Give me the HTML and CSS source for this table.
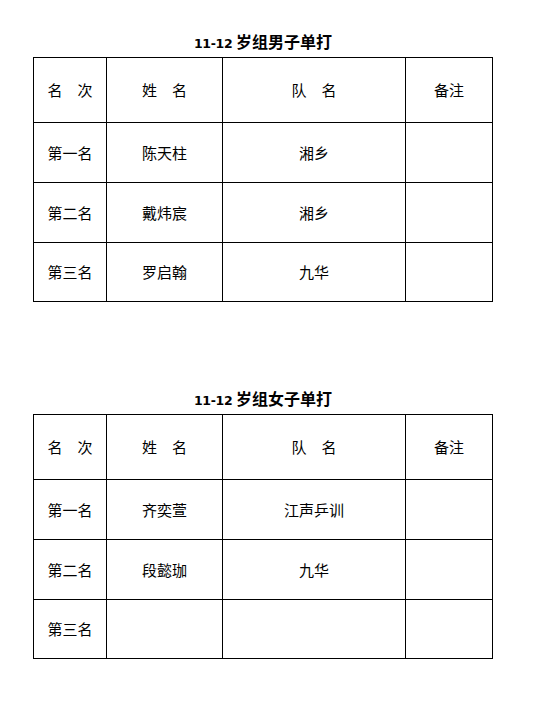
FILE: index.html
```html
<!DOCTYPE html>
<html>
<head>
<meta charset="utf-8">
<link rel="stylesheet" href="styles.css">
</head>
<body>
<div class="page">
  <section class="block">
    <h2 class="title"><span class="num">11-12</span> 岁组男子单打</h2>
    <table class="grid">
      <colgroup><col class="c1"><col class="c2"><col class="c3"><col class="c4"></colgroup>
      <tr class="head"><td>名　次</td><td>姓　名</td><td>队　名</td><td>备注</td></tr>
      <tr><td>第一名</td><td>陈天柱</td><td>湘乡</td><td></td></tr>
      <tr><td>第二名</td><td>戴炜宸</td><td>湘乡</td><td></td></tr>
      <tr class="last"><td>第三名</td><td>罗启翰</td><td>九华</td><td></td></tr>
    </table>
  </section>
  <section class="block second">
    <h2 class="title"><span class="num">11-12</span> 岁组女子单打</h2>
    <table class="grid">
      <colgroup><col class="c1"><col class="c2"><col class="c3"><col class="c4"></colgroup>
      <tr class="head"><td>名　次</td><td>姓　名</td><td>队　名</td><td>备注</td></tr>
      <tr><td>第一名</td><td>齐奕萱</td><td>江声乒训</td><td></td></tr>
      <tr><td>第二名</td><td>段懿珈</td><td>九华</td><td></td></tr>
      <tr class="last"><td>第三名</td><td></td><td></td><td></td></tr>
    </table>
  </section>
</div>
</body>
</html>
```
FILE: styles.css
```css
html, body {
  margin: 0;
  padding: 0;
  background: #fff;
}
body {
  font-family: "Noto Sans CJK SC", "Liberation Sans", sans-serif;
  color: #000;
}
.page {
  padding: 31px 0 0 33px;
  width: 460px;
}
.block.second {
  margin-top: 86px;
}
.title {
  margin: 0;
  height: 26px;
  line-height: 20px;
  font-size: 16px;
  font-weight: bold;
  text-align: center;
}
.title .num {
  font-family: "DejaVu Sans", sans-serif;
  font-size: 12.5px;
  letter-spacing: -0.3px;
}
.grid {
  border-collapse: collapse;
  table-layout: fixed;
  width: 459px;
}
.c1 { width: 73px; }
.c2 { width: 116px; }
.c3 { width: 183px; }
.c4 { width: 87px; }
.grid td {
  border: 1px solid #000;
  height: 59px;
  padding: 0;
  text-align: center;
  vertical-align: middle;
  font-size: 15px;
  line-height: 16px;
}
.grid .head td {
  height: 64px;
}
.grid .last td {
  height: 58px;
}
```
